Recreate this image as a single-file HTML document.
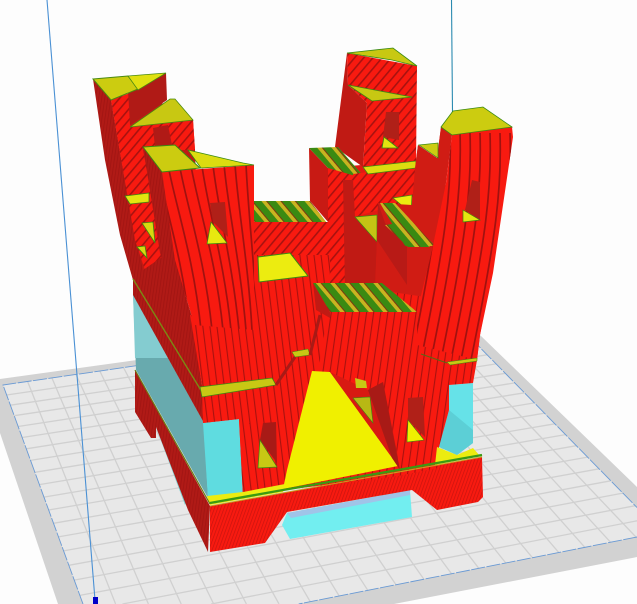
<!DOCTYPE html>
<html><head><meta charset="utf-8"><style>html,body{margin:0;padding:0;background:#fdfdfd;width:637px;height:604px;overflow:hidden}svg{display:block}</style></head><body>
<svg width="637" height="604" viewBox="0 0 637 604" xmlns="http://www.w3.org/2000/svg">
<defs>
<pattern id="d" width="7" height="7" patternUnits="userSpaceOnUse" patternTransform="rotate(40)"><rect width="7" height="7" fill="#f81a10"/><rect width="1.6" height="7" fill="#a81210"/></pattern>
<pattern id="l" width="7" height="7" patternUnits="userSpaceOnUse" patternTransform="rotate(-7)"><rect width="7" height="7" fill="#f81a10"/><rect width="1.1" height="7" fill="#a81210"/></pattern>
<pattern id="r" width="7" height="7" patternUnits="userSpaceOnUse" patternTransform="rotate(8)"><rect width="7" height="7" fill="#f81a10"/><rect width="1.1" height="7" fill="#a81210"/></pattern>
<pattern id="f" width="3" height="3" patternUnits="userSpaceOnUse" patternTransform="rotate(20)"><rect width="3" height="3" fill="#f81a10"/><rect width=".7" height="3" fill="#c81410"/></pattern>
<pattern id="k" width="3" height="3" patternUnits="userSpaceOnUse" patternTransform="rotate(8)"><rect width="3" height="3" fill="#b01a16"/><rect width=".8" height="3" fill="#a01412"/></pattern>
<pattern id="s" width="11" height="11" patternUnits="userSpaceOnUse" patternTransform="rotate(-40)"><rect width="11" height="11" fill="#3a8a12"/><rect x="5" width="3.5" height="11" fill="#c8b420"/><rect x="8.5" width="1" height="11" fill="#7a3a10"/></pattern>
<clipPath id="ct"><polygon points="160,172 254,165 254,330 194,325 192,317 175,260"/></clipPath>
<clipPath id="cr"><polygon points="452,135 512,127 513,137 493,273 480,335 477,360 417,345 417,312 432,250 446,183"/></clipPath>
</defs>
<rect width="637" height="604" fill="#fdfdfd"/>

<!-- build plate -->
<polygon points="0,379 137,360 453,315 480,335 637,487 637,557 394,604 58,604 0,433" fill="#d2d2d2"/>
<polygon points="3,385 453,320 637,507.5 637,537 298.7,604 83,604" fill="#e8e8e8"/>
<g stroke="#d0d0d0" stroke-width="1.3" fill="none">
<path d="M6.6,395L461.2,328.4M10.4,405.2L469.7,337M14.2,415.7L478.3,345.8M18.1,426.5L487.1,354.8M22.2,437.5L496.1,363.9M26.3,448.8L505.3,373.3M30.5,460.4L514.7,382.9M34.9,472.3L524.4,392.8M39.3,484.6L534.3,402.9M43.9,497.1L544.4,413.2M48.6,510L554.8,423.8M53.4,523.3L565.4,434.6M58.4,536.9L576.3,445.7M63.5,550.9L587.5,457.1M68.8,565.3L599,468.8M74.2,580.1L610.7,480.8M79.8,595.4L622.8,493.1M122.5,604L635.2,505.7M211.2,604L637,520.8"/>
<path d="M27.6,381.5L115.6,604M51.9,377.9L148.4,604M76,374.5L181.2,604M99.8,371L213.7,604M123.5,367.6L246.4,604M146.9,364.2L279,604M170.1,360.9L310.3,601.8M193,357.6L339.2,596M215.8,354.3L367.8,590.3M238.4,351L396,584.7M260.7,347.8L423.9,579.2M282.9,344.6L451.5,573.7M304.8,341.4L478.8,568.3M326.5,338.3L505.7,562.9M348.1,335.2L532.3,557.6M369.4,332.1L558.7,552.4M390.6,329L584.7,547.2M411.6,326L610.4,542.1M432.4,323L635.9,537"/>
</g>
<g stroke="#6a9ad4" stroke-width=".9" fill="none" stroke-dasharray="14 1.5">
<path d="M83,604L3,385L453,320L637,507.5M637,537L298.7,604"/>
</g>
<path d="M47,0L95,600" stroke="#4a90d4" stroke-width="1.1" fill="none"/>
<path d="M451.5,0L452.5,112" stroke="#2a8ab0" stroke-width="1.1" fill="none"/>
<rect x="93" y="597" width="5" height="7" fill="#0000c8"/>

<!-- supports -->
<polygon points="133,293 136,370 208,498 204,423" fill="#68aaae"/>
<polygon points="133,293 135,358 168,358 150,325" fill="#84ccd0"/>
<polygon points="203,423 239,419 243,493 208,498" fill="#5fdce0"/>
<polygon points="157,430 185,505 195,490 168,440" fill="#7cd0d2"/>
<polygon points="287,513 410,490 412,517 290,539 282,525" fill="#72eef0"/>
<polygon points="287,513 410,490 410,495 291,518" fill="#a0c4e8"/>
<polygon points="449,385 473,383 473,443 457,455 439,447 449,410" fill="#66e2e8"/>
<polygon points="449,410 473,430 473,443 457,455 439,447" fill="#5ccfd6"/>

<!-- backing -->
<polygon points="111,100 138,90 193,120 195,150 200,300 135,280 125,180" fill="#c01a14"/>
<polygon points="328,168 416,160 418,145 437,158 441,127 450,300 330,300" fill="#e01a12"/>

<!-- rear left tower -->
<polygon points="93,79 111,100 125,180 143,270 133,280 120,235 105,160" fill="url(#k)"/>
<polygon points="111,100 138,90 130,127 193,120 195,150 143,150 163,255 150,285 135,240" fill="url(#d)"/>
<polygon points="128,90 166,73 167,100 130,125" fill="#b01a16"/>
<polygon points="93,79 128,76 138,89 111,100" fill="#cccc10" stroke="#4a8a10" stroke-width="1"/>
<polygon points="128,76 166,73 138,90" fill="#e0e010" stroke="#4a8a10" stroke-width=".8"/>
<polygon points="170,99 175,99 193,120 130,127" fill="#c8c812" stroke="#4a8a10" stroke-width=".8"/>
<polygon points="153,128 168,125 172,145 155,147" fill="#b01a16"/>
<polygon points="125,196 149,193 149,202 130,204" fill="#e4e410" stroke="#3a8a12" stroke-width=".8"/>
<polygon points="142,223 153,222 155,243" fill="#d8d810" stroke="#3a8a12" stroke-width=".8"/>
<polygon points="137,247 145,246 147,258" fill="#d8d810" stroke="#3a8a12" stroke-width=".8"/>
<polygon points="133,278 143,270 165,255 192,317 202,385 204,423 133,295" fill="url(#k)"/>

<!-- tall tower -->
<polygon points="347,53 348,85 367,103 363,167 335,147" fill="#c01a14"/>
<polygon points="347,53 417,66 416,165 363,167 367,103 348,85" fill="url(#d)"/>
<polygon points="347,53 393,48 417,66 392,60" fill="#c8c812" stroke="#3a8a12" stroke-width=".8"/>
<polygon points="348,85 412,97 372,101" fill="#c8c812" stroke="#3a8a12" stroke-width=".8"/>
<polygon points="386,112 399,112 399,140 383,137" fill="#b02018"/>
<polygon points="384,137 398,148 382,148" fill="#e4e410" stroke="#3a8a12" stroke-width=".8"/>

<!-- central blocks -->
<polygon points="254,201 310,201 310,223 254,223" fill="url(#s)"/>
<polygon points="257,201 310,201 327,223 257,223" fill="url(#s)"/>
<polygon points="254,223 345,223 345,300 254,330" fill="url(#d)"/>
<polygon points="309,148 328,168 328,222 310,201" fill="#c81a14"/>
<polygon points="328,168 366,179 353,240 345,283 328,283" fill="url(#d)"/>
<polygon points="309,148 338,147 366,179 328,168" fill="url(#s)"/>
<polygon points="353,174 416,166 412,205 378,210 355,217" fill="url(#d)"/>
<polygon points="363,167 416,161 416,168 368,174" fill="#dcdc10" stroke="#3a8a12" stroke-width=".7"/>
<polygon points="343,180 353,180 355,217 377,240 375,290 345,290" fill="#c01a14"/>
<polygon points="355,217 377,215 377,242" fill="#c4c414" stroke="#3a8a12" stroke-width=".7"/>
<polygon points="393,198 412,195 411,213" fill="#ecec10" stroke="#3a8a12" stroke-width=".7"/>

<!-- right tower back -->
<polygon points="378,203 412,205 415,168 418,145 437,158 441,127 452,135 446,183 438,247 420,300 375,300" fill="#d01c14"/>
<polygon points="419,145 438,143 438,158" fill="#cccc12" stroke="#3a8a12" stroke-width=".7"/>
<polygon points="378,203 385,223 407,247 407,285 377,240" fill="#b81a16"/>
<polygon points="380,203 395,203 435,246 405,246" fill="url(#s)"/>
<polygon points="385,225 400,223 430,247 408,247" fill="url(#s)"/>

<!-- base -->
<polygon points="135,370 135,412 151,438 156,438 156,427 188,510 208,552 210,506" fill="url(#k)"/>
<polygon points="210,506 482,457 483,497 478,502 437,510 412,490 287,512 265,543 210,552" fill="url(#f)"/>

<!-- main front -->
<polygon points="202,385 254,310 345,285 445,300 490,280 480,335 477,360 473,383 449,385 449,410 439,447 437,468 398,476 285,490 243,497 239,419 203,423" fill="url(#r)"/>
<polygon points="202,385 190,315 254,300 330,300 318,372 285,490 243,497 239,419 203,423" fill="url(#l)"/>
<polygon points="160,172 254,165 254,330 194,325 192,317 175,260" fill="#f81a10"/>
<g clip-path="url(#ct)" fill="none" stroke="#a01210" stroke-width="1.7">
<path d="M136,170C144,210 161,260 168,330M147,170C155,210 172,260 179,330M158,170C166,210 183,260 190,330M169,170C177,210 194,260 201,330M180,168C188,210 205,260 212,330M191,166C199,210 216,260 223,330M202,166C208,210 224,260 231,330M213,165C218,210 232,260 239,330M224,164C228,210 240,260 246,330M235,164C238,210 248,260 252,330M246,164C248,210 254,260 258,330"/>
</g>
<polygon points="254,250 330,250 330,315 254,335" fill="url(#l)"/>
<polygon points="254,222 330,222 330,255 254,255" fill="url(#d)"/>
<polygon points="452,135 512,127 513,137 493,273 480,335 477,360 417,345 417,312 432,250 446,183" fill="#f81a10"/>
<g clip-path="url(#cr)" fill="none" stroke="#a01210" stroke-width="1.7">
<path d="M410,133C412,190 405,240 385,340L380,365M420,133C422,190 415,240 395,340L390,365M430,133C432,190 425,240 405,340L400,365M440,133C442,190 435,240 415,340L410,365M450,133C452,190 445,240 425,340L420,365M460,133C462,190 455,240 435,340L430,365M470,133C472,190 465,240 445,340L440,365M480,133C482,190 475,240 455,340L450,365M490,133C492,190 485,240 465,340L460,365M500,133C502,190 495,240 475,340L470,365M510,133C512,190 505,240 485,340L480,365"/>
</g>
<polygon points="441,127 453,111 483,107 512,127 452,135" fill="#cccc10" stroke="#3a8a12" stroke-width=".8"/>
<polygon points="472,180 480,182 480,220 465,210" fill="#b02018"/>
<polygon points="463,210 480,220 463,222" fill="#e4e410" stroke="#3a8a12" stroke-width=".7"/>

<!-- left front tower details -->
<polygon points="143,147 162,172 175,260 192,317 170,283 160,253" fill="url(#k)"/>
<polygon points="143,147 175,145 200,168 162,172" fill="#cccc10" stroke="#3a8a12" stroke-width="1"/>
<polygon points="188,150 243,163 254,165 201,168" fill="#dcdc10" stroke="#3a8a12" stroke-width=".8"/>
<polygon points="210,203 225,202 228,237 213,222" fill="#b02018"/>
<polygon points="211,222 227,243 207,244" fill="#e8e810" stroke="#3a8a12" stroke-width=".7"/>
<polygon points="258,257 290,253 308,276 259,282" fill="#ecec10" stroke="#3a8a12" stroke-width="1"/>

<!-- centre striped ledge -->
<polygon points="313,283 382,283 417,312 330,312" fill="url(#s)"/>
<polygon points="313,283 330,312 330,318 316,310" fill="#c01a14"/>

<!-- yellow floor -->
<polygon points="312,371 330,372 398,466 283,489 287,470" fill="#f0f000"/>
<polygon points="330,372 368,390 383,382 398,457 398,466" fill="#d81a12"/>
<polygon points="368,390 383,382 400,470 392,458" fill="#a81a16"/>
<polygon points="355,378 366,381 367,388 356,388" fill="#c8c814"/>
<polygon points="353,398 370,397 373,423" fill="#b8b814" stroke="#3a8a12" stroke-width=".6"/>
<polygon points="207,496 243,492 285,484 283,492 210,505" fill="#ecec10"/>
<polygon points="437,447 457,455 473,448 480,456 435,465" fill="#ecec10"/>
<path d="M210,503L283,490L398,470L437,463L482,455" stroke="#3a9a12" stroke-width="2.4" fill="none"/>
<path d="M210,506L482,457" stroke="#c8a020" stroke-width="1" fill="none"/>
<path d="M135,370L210,504" stroke="#6a7a14" stroke-width="1.2" fill="none"/>
<path d="M133,279L202,392" stroke="#7a8a14" stroke-width="1.4" fill="none"/>

<!-- ledges and holes -->
<polygon points="200,387 272,378 276,385 202,397" fill="#c8c814" stroke="#3a8a12" stroke-width=".7"/>
<polygon points="292,352 308,349 310,355 295,357" fill="#c8c814" stroke="#3a8a12" stroke-width=".5"/>
<polygon points="447,362 477,358 477,361 450,365" fill="#c8c814" stroke="#3a8a12" stroke-width=".5"/>
<path d="M276,385L295,357" stroke="#a81a16" stroke-width="3" fill="none"/>
<path d="M310,355L320,315" stroke="#a81a16" stroke-width="3" fill="none"/>
<path d="M421,354L447,363" stroke="#5a6a14" stroke-width="1" fill="none"/>
<polygon points="263,423 276,422 277,463 260,440" fill="#a81a16"/>
<polygon points="260,440 277,467 258,468" fill="#c8c814" stroke="#3a8a12" stroke-width=".7"/>
<polygon points="408,398 423,397 425,437 408,420" fill="#b02018"/>
<polygon points="408,420 424,440 407,442" fill="#f0f000" stroke="#3a8a12" stroke-width=".6"/>
</svg>
</body></html>
